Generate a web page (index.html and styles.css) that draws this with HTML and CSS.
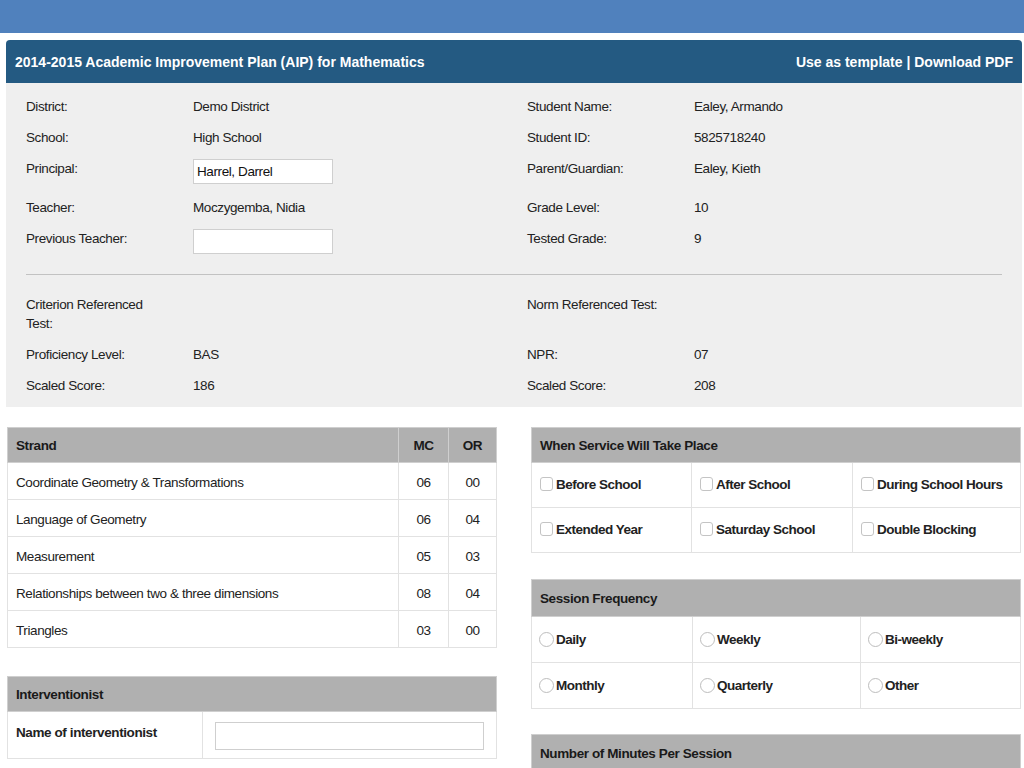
FILE: index.html
```html
<!DOCTYPE html>
<html lang="en">
<head>
<meta charset="utf-8">
<title>Academic Improvement Plan</title>
<link rel="stylesheet" href="styles.css">
</head>
<body>
<div class="topbar"></div>

<section class="panel">
  <header class="panel-head">
    <h1 class="panel-title">2014-2015 Academic Improvement Plan (AIP) for Mathematics</h1>
    <div class="panel-actions"><a href="#">Use as template</a> | <a href="#">Download PDF</a></div>
  </header>
  <div class="panel-body">
    <div class="info-grid">
      <div class="field"><span class="lbl">District:</span><span class="val">Demo District</span></div>
      <div class="field"><span class="lbl">Student Name:</span><span class="val">Ealey, Armando</span></div>
      <div class="field"><span class="lbl">School:</span><span class="val">High School</span></div>
      <div class="field"><span class="lbl">Student ID:</span><span class="val">5825718240</span></div>
      <div class="field"><span class="lbl">Principal:</span><input class="txt" type="text" value="Harrel, Darrel"></div>
      <div class="field"><span class="lbl">Parent/Guardian:</span><span class="val">Ealey, Kieth</span></div>
      <div class="field"><span class="lbl">Teacher:</span><span class="val">Moczygemba, Nidia</span></div>
      <div class="field"><span class="lbl">Grade Level:</span><span class="val">10</span></div>
      <div class="field"><span class="lbl">Previous Teacher:</span><input class="txt" type="text" value=""></div>
      <div class="field"><span class="lbl">Tested Grade:</span><span class="val">9</span></div>
    </div>
    <hr class="sep">
    <div class="info-grid second">
      <div class="field"><span class="lbl">Criterion Referenced Test:</span><span class="val"></span></div>
      <div class="field"><span class="lbl">Norm Referenced Test:</span><span class="val"></span></div>
      <div class="field"><span class="lbl">Proficiency Level:</span><span class="val">BAS</span></div>
      <div class="field"><span class="lbl">NPR:</span><span class="val">07</span></div>
      <div class="field"><span class="lbl">Scaled Score:</span><span class="val">186</span></div>
      <div class="field"><span class="lbl">Scaled Score:</span><span class="val">208</span></div>
    </div>
  </div>
</section>

<div class="lower">
  <div class="col">
    <table class="grid strand">
      <colgroup><col><col class="w-mc"><col class="w-or"></colgroup>
      <thead>
        <tr><th>Strand</th><th class="c-num">MC</th><th class="c-num">OR</th></tr>
      </thead>
      <tbody>
        <tr><td>Coordinate Geometry &amp; Transformations</td><td class="c-num">06</td><td class="c-num">00</td></tr>
        <tr><td>Language of Geometry</td><td class="c-num">06</td><td class="c-num">04</td></tr>
        <tr><td>Measurement</td><td class="c-num">05</td><td class="c-num">03</td></tr>
        <tr><td>Relationships between two &amp; three dimensions</td><td class="c-num">08</td><td class="c-num">04</td></tr>
        <tr><td>Triangles</td><td class="c-num">03</td><td class="c-num">00</td></tr>
      </tbody>
    </table>

    <table class="grid interv">
      <colgroup><col class="w-ilabel"><col></colgroup>
      <thead>
        <tr><th colspan="2">Interventionist</th></tr>
      </thead>
      <tbody>
        <tr><td class="i-label">Name of interventionist</td><td class="i-input"><input class="txt wide" type="text" value=""></td></tr>
      </tbody>
    </table>
  </div>

  <div class="col">
    <table class="grid opts service">
      <colgroup><col class="w-s1"><col class="w-s2"><col></colgroup>
      <thead>
        <tr><th colspan="3">When Service Will Take Place</th></tr>
      </thead>
      <tbody>
        <tr>
          <td><span class="chk"></span>Before School</td>
          <td><span class="chk"></span>After School</td>
          <td><span class="chk"></span>During School Hours</td>
        </tr>
        <tr>
          <td><span class="chk"></span>Extended Year</td>
          <td><span class="chk"></span>Saturday School</td>
          <td><span class="chk"></span>Double Blocking</td>
        </tr>
      </tbody>
    </table>

    <table class="grid opts freq">
      <colgroup><col class="w-f1"><col class="w-f2"><col></colgroup>
      <thead>
        <tr><th colspan="3">Session Frequency</th></tr>
      </thead>
      <tbody>
        <tr>
          <td><span class="radio"></span>Daily</td>
          <td><span class="radio"></span>Weekly</td>
          <td><span class="radio"></span>Bi-weekly</td>
        </tr>
        <tr>
          <td><span class="radio"></span>Monthly</td>
          <td><span class="radio"></span>Quarterly</td>
          <td><span class="radio"></span>Other</td>
        </tr>
      </tbody>
    </table>

    <table class="grid opts minutes">
      <thead>
        <tr><th>Number of Minutes Per Session</th></tr>
      </thead>
    </table>
  </div>
</div>
</body>
</html>
```

FILE: styles.css
```css
html, body {
  margin: 0;
  padding: 0;
  background: #ffffff;
}

body {
  font-family: "Liberation Sans", Arial, Helvetica, sans-serif;
  font-size: 13.5px;
  letter-spacing: -0.4px;
  color: #222222;
}

.topbar {
  height: 33px;
  background: #5081bd;
}

/* ---------- main panel ---------- */
.panel {
  margin: 7px 2px 0 6px;
  background: #efefef;
  border-radius: 4px 4px 0 0;
}

.panel-head {
  display: flex;
  justify-content: space-between;
  align-items: center;
  height: 43px;
  padding: 0 9px;
  background: #245a82;
  border-radius: 4px 4px 0 0;
  color: #ffffff;
  font-size: 14px;
  font-weight: bold;
  letter-spacing: 0;
}

.panel-title {
  margin: 0;
  font-size: 14px;
  font-weight: bold;
}

.panel-actions a {
  color: #ffffff;
  text-decoration: none;
}

.panel-body {
  padding: 8px 20px 6px 20px;
}

.info-grid {
  display: grid;
  grid-template-columns: 501px 1fr;
}

.info-grid.second {
  margin-top: 14px;
}

.field {
  display: flex;
  align-items: flex-start;
  padding: 6px 0;
  line-height: 19px;
}

.lbl {
  flex: 0 0 167px;
  box-sizing: border-box;
  padding-right: 30px;
}

.txt {
  box-sizing: border-box;
  width: 140px;
  height: 25px;
  margin: 0 0 2px 0;
  padding: 2px 3px;
  border: 1px solid #cfcfcf;
  background: #ffffff;
  font-family: "Liberation Sans", Arial, sans-serif;
  font-size: 13.5px;
  letter-spacing: -0.4px;
  color: #111111;
  outline: none;
}

.sep {
  margin: 12px 0 0 0;
  border: 0;
  height: 1px;
  background: #c2c2c2;
}

/* ---------- lower tables ---------- */
.lower {
  display: grid;
  grid-template-columns: 490px 490px;
  column-gap: 34px;
  margin: 20px 3px 0 7px;
  align-items: start;
}

.col {
  display: flex;
  flex-direction: column;
}

.grid {
  width: 100%;
  border-collapse: collapse;
  border: 1px solid #dedede;
  background: #ffffff;
  table-layout: fixed;
}

.grid th {
  background: #b0b0b0;
  color: #1a1a1a;
  font-weight: bold;
  text-align: left;
  padding: 8px 8px 7px 8px;
  line-height: 19px;
  border: 1px solid #cfcfcf;
}

.grid td {
  padding: 10px 8px 7px 8px;
  line-height: 19px;
  border: 1px solid #e2e2e2;
  vertical-align: top;
}

.w-mc { width: 50px; }
.w-or { width: 48px; }

.grid th.c-num,
.grid td.c-num {
  text-align: center;
}

.interv {
  margin-top: 28px;
}

.w-ilabel { width: 195px; }

.interv td.i-label {
  padding: 11px 8px;
  font-weight: bold;
}

.interv td.i-input {
  padding: 10px 12px 8px 12px;
}

.txt.wide {
  width: 100%;
  height: 28px;
  margin: 0;
}

.opts td {
  font-weight: bold;
  letter-spacing: -0.5px;
  padding: 12px 8px 13px 8px;
  white-space: nowrap;
}

.w-s1 { width: 160px; }
.w-s2 { width: 161px; }

.freq {
  margin-top: 26px;
}

.freq th {
  padding: 9px 8px 8px 8px;
}

.freq td {
  padding: 13px 7px 13px 7px;
}

.w-f1 { width: 161px; }
.w-f2 { width: 168px; }

.minutes {
  margin-top: 25px;
}

.minutes th {
  padding: 9px 8px 9px 8px;
}

.chk {
  display: inline-block;
  box-sizing: border-box;
  width: 13px;
  height: 14px;
  margin-right: 3px;
  border: 1px solid #c4c4c4;
  border-radius: 3px;
  background: #ffffff;
  vertical-align: -2px;
}

.radio {
  display: inline-block;
  box-sizing: border-box;
  width: 15px;
  height: 15px;
  margin-right: 2px;
  border: 1px solid #bdbdbd;
  border-radius: 50%;
  background: #ffffff;
  vertical-align: -3px;
}
```
